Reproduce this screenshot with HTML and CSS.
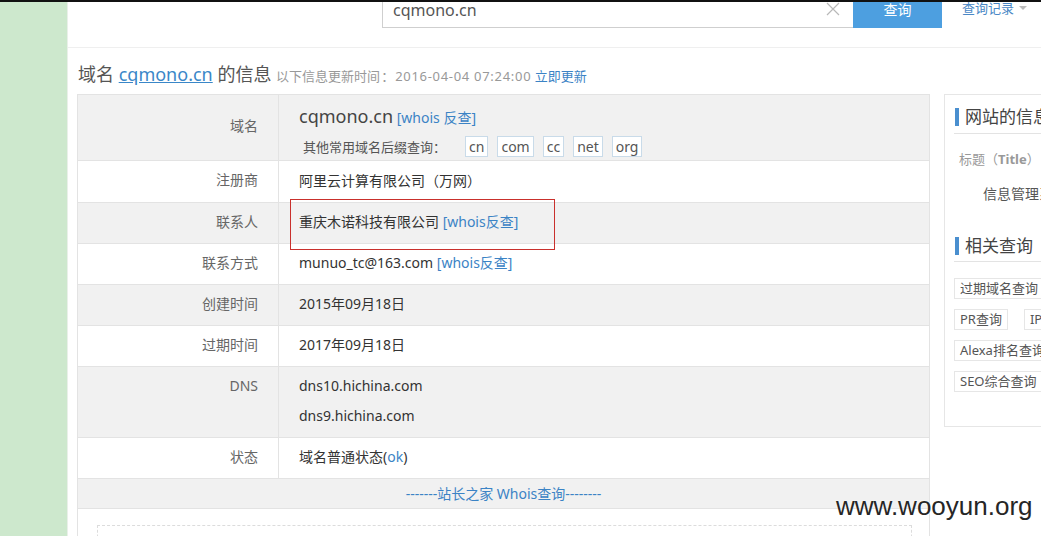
FILE: index.html
```html
<!DOCTYPE html>
<html lang="zh-CN">
<head>
<meta charset="utf-8">
<title>cqmono.cn 的信息</title>
<link rel="stylesheet" href="styles.css">
</head>
<body>
<div class="topline"></div>
<div class="page">
  <aside class="green"></aside>
  <main class="main">
    <div class="topbar">
      <div class="search">
        <div class="search-input">
          <span class="search-text">cqmono.cn</span>
          <svg class="clear" width="14" height="14" viewBox="0 0 14 14"><path d="M1 1L13 13M13 1L1 13" stroke="#b8b8b8" stroke-width="1.2" fill="none"/></svg>
        </div>
        <button class="search-btn">查询</button>
        <a class="history">查询记录<span class="caret"></span></a>
      </div>
    </div>
    <h1 class="title">域名 <a class="title-link">cqmono.cn</a> 的信息 <small class="update">以下信息更新时间<span class="cjk">：</span><span class="date">2016-04-04 07:24:00</span> <a class="link">立即更新</a></small></h1>
    <div class="content">
      <div class="mark"></div>
      <table class="whois">
        <tr class="gray first">
          <th class="mid">域名</th>
          <td>
            <div class="domain-line"><span class="domain">cqmono.cn</span> <a class="link">[whois 反查]</a></div>
            <div class="suffix-line"><span class="suffix-label">其他常用域名后缀查询<span class="cjk">：</span></span><span class="sfx">cn</span><span class="sfx">com</span><span class="sfx">cc</span><span class="sfx">net</span><span class="sfx">org</span></div>
          </td>
        </tr>
        <tr><th>注册商</th><td>阿里云计算有限公司<span class="cjk">（</span>万网<span class="cjk">）</span></td></tr>
        <tr class="gray"><th>联系人</th><td>重庆木诺科技有限公司 <a class="link">[whois反查]</a></td></tr>
        <tr><th>联系方式</th><td>munuo_tc@163.com <a class="link">[whois反查]</a></td></tr>
        <tr class="gray"><th>创建时间</th><td>2015年09月18日</td></tr>
        <tr><th>过期时间</th><td>2017年09月18日</td></tr>
        <tr class="gray"><th>DNS</th><td>dns10.hichina.com<br>dns9.hichina.com</td></tr>
        <tr><th>状态</th><td>域名普通状态(<a class="link">ok</a>)</td></tr>
        <tr class="gray"><td colspan="2" class="foot"><a class="link">-------站长之家 Whois查询--------</a></td></tr>
        <tr><td colspan="2" class="more"><div class="dashed"></div></td></tr>
      </table>
      <aside class="panel">
        <h2 class="panel-h">网站的信息</h2>
        <div class="meta-label">标题<span class="cjk">（</span><b>Title</b><span class="cjk">）</span></div>
        <div class="meta-value">信息管理系统</div>
        <h2 class="panel-h second">相关查询</h2>
        <div class="btns">
          <div class="btn-row"><span class="qbtn">过期域名查询</span><span class="qbtn">域名查询</span></div>
          <div class="btn-row"><span class="qbtn">PR查询</span><span class="qbtn">IP查询</span></div>
          <div class="btn-row"><span class="qbtn">Alexa排名查询</span></div>
          <div class="btn-row"><span class="qbtn">SEO综合查询</span><span class="qbtn">友链查询</span></div>
        </div>
      </aside>
    </div>
    <div class="watermark">www.wooyun.org</div>
  </main>
</div>
</body>
</html>
```
FILE: styles.css
```css
html, body {
  margin: 0;
  padding: 0;
}
body {
  width: 1041px;
  height: 536px;
  overflow: hidden;
  font-family: "Noto Sans", "Noto Sans CJK SC", sans-serif;
  font-size: 14px;
  color: #333;
  background: #fff;
  position: relative;
}
.cjk {
  font-family: "Noto Sans CJK SC", sans-serif;
}
.topline {
  position: absolute;
  top: 0;
  left: 0;
  right: 0;
  height: 2px;
  background: #111;
  z-index: 5;
}
.page {
  display: flex;
  height: 536px;
}
.green {
  width: 67px;
  flex: none;
  background: #cde8cd;
}
.main {
  flex: 1;
  min-width: 0;
  overflow: hidden;
  position: relative;
  border-left: 1px solid #e9f0e9;
}
.topbar {
  height: 47px;
  border-bottom: 1px solid #efefef;
  overflow: hidden;
}
.search {
  display: flex;
  align-items: flex-start;
  margin-top: -8px;
  padding-left: 314px;
}
.search-input {
  width: 471px;
  height: 36px;
  border: 1px solid #cfcfcf;
  border-right: none;
  display: flex;
  align-items: center;
  justify-content: space-between;
  padding: 0 13px 0 10px;
  box-sizing: border-box;
}
.search-text {
  font-size: 16px;
  color: #555;
  line-height: 16px;
  margin-top: -1px;
}
.clear {
  margin-top: -3px;
}
.search-btn {
  width: 89px;
  height: 36px;
  border: none;
  background: #4d9fe0;
  color: #fff;
  font-family: "Noto Sans CJK SC", sans-serif;
  font-size: 14px;
  line-height: 18px;
  padding: 0 0 2px;
  margin: 0;
}
.history {
  margin-left: 20px;
  padding-top: 6px;
  font-size: 13px;
  color: #4a88c6;
  line-height: 20px;
  display: flex;
  align-items: center;
}
.caret {
  display: inline-block;
  margin-left: 5px;
  border-left: 4px solid transparent;
  border-right: 4px solid transparent;
  border-top: 4px solid #bbb;
}
.title {
  margin: 14px 0 0 10px;
  font-size: 18px;
  font-weight: normal;
  line-height: 24px;
  color: #555;
}
.title-link {
  color: #3a87c8;
  text-decoration: underline;
}
.update {
  font-size: 13px;
  color: #999;
}
.update .cjk {
  margin: 0 1px;
}
.date {
  letter-spacing: 0.7px;
}
.link {
  color: #3b83c5;
  text-decoration: none;
}
.content {
  margin-top: 6px;
  padding-left: 9px;
  display: flex;
  align-items: flex-start;
  gap: 14px;
  position: relative;
}
.mark {
  position: absolute;
  left: 222px;
  top: 105px;
  width: 263px;
  height: 49px;
  border: 1px solid #c9302c;
  z-index: 2;
}
.whois {
  width: 853px;
  flex: none;
  border-collapse: collapse;
  border: 1px solid #e3e3e3;
}
.whois tr {
  border-bottom: 1px solid #e3e3e3;
}
.whois tr.gray {
  background: #f1f1f1;
}
.whois th {
  width: 180px;
  text-align: right;
  font-weight: normal;
  color: #666;
  padding: 4px 20px 6px 0;
  line-height: 30px;
  vertical-align: top;
  border-right: 1px solid #e3e3e3;
}
.whois th.mid {
  vertical-align: middle;
  padding-top: 0;
  padding-bottom: 4px;
}
.whois td {
  padding: 4px 20px 6px 20px;
  line-height: 30px;
  vertical-align: top;
  color: #333;
}
.whois .first td {
  padding: 4px 20px 0 20px;
}
.domain-line {
  height: 34px;
  line-height: 34px;
}
.domain {
  font-size: 18px;
  color: #444;
}
.suffix-line {
  display: flex;
  align-items: center;
  height: 27px;
  padding-left: 4px;
}
.suffix-label {
  font-size: 13px;
  line-height: 20px;
  color: #555;
  margin-right: 19px;
}
.sfx {
  display: inline-block;
  border: 1px solid #c9dbe9;
  background: #fff;
  font-size: 14px;
  line-height: 19px;
  padding: 0 3px;
  margin-right: 9px;
  color: #555;
}
.whois td.foot {
  text-align: center;
  line-height: 29px;
  padding: 0;
}
.whois tr:last-child {
  border-bottom: none;
}
.whois td.more {
  padding: 16px 17px 0 19px;
}
.dashed {
  height: 40px;
  border: 1px dashed #dcdcdc;
  border-bottom: none;
}
.panel {
  width: 260px;
  flex: none;
  border: 1px solid #e6e6e6;
  padding: 11px 0 34px 9px;
  box-sizing: border-box;
  height: 333px;
}
.panel-h {
  margin: 0;
  font-size: 17px;
  font-weight: normal;
  line-height: 22px;
  color: #444;
  padding: 0 0 5px 11px;
  border-bottom: 1px solid #e3e3e3;
  position: relative;
}
.panel-h::before {
  content: "";
  position: absolute;
  left: 1px;
  top: 2px;
  width: 4px;
  height: 18px;
  background: #4a8fcf;
}
.panel-h.second {
  margin-top: 31px;
  padding-bottom: 4px;
}
.meta-label {
  margin-top: 16px;
  padding-left: 5px;
  font-size: 13px;
  line-height: 18px;
  color: #999;
}
.meta-label b {
  font-weight: bold;
}
.meta-value {
  margin-top: 16px;
  padding-left: 29px;
  font-size: 14px;
  line-height: 20px;
  color: #555;
}
.btns {
  margin-top: 16px;
  display: flex;
  flex-direction: column;
  gap: 10px;
}
.btn-row {
  display: flex;
  gap: 16px;
}
.qbtn {
  display: inline-block;
  border: 1px solid #e6e6e6;
  font-size: 13px;
  line-height: 19px;
  padding: 0 5px;
  color: #555;
  white-space: nowrap;
}
.watermark {
  position: absolute;
  left: 768px;
  top: 491px;
  font-family: "Liberation Sans", Arial, sans-serif;
  font-size: 26px;
  line-height: 30px;
  color: #262626;
  text-shadow: 0 0 2px #fff;
}
```
